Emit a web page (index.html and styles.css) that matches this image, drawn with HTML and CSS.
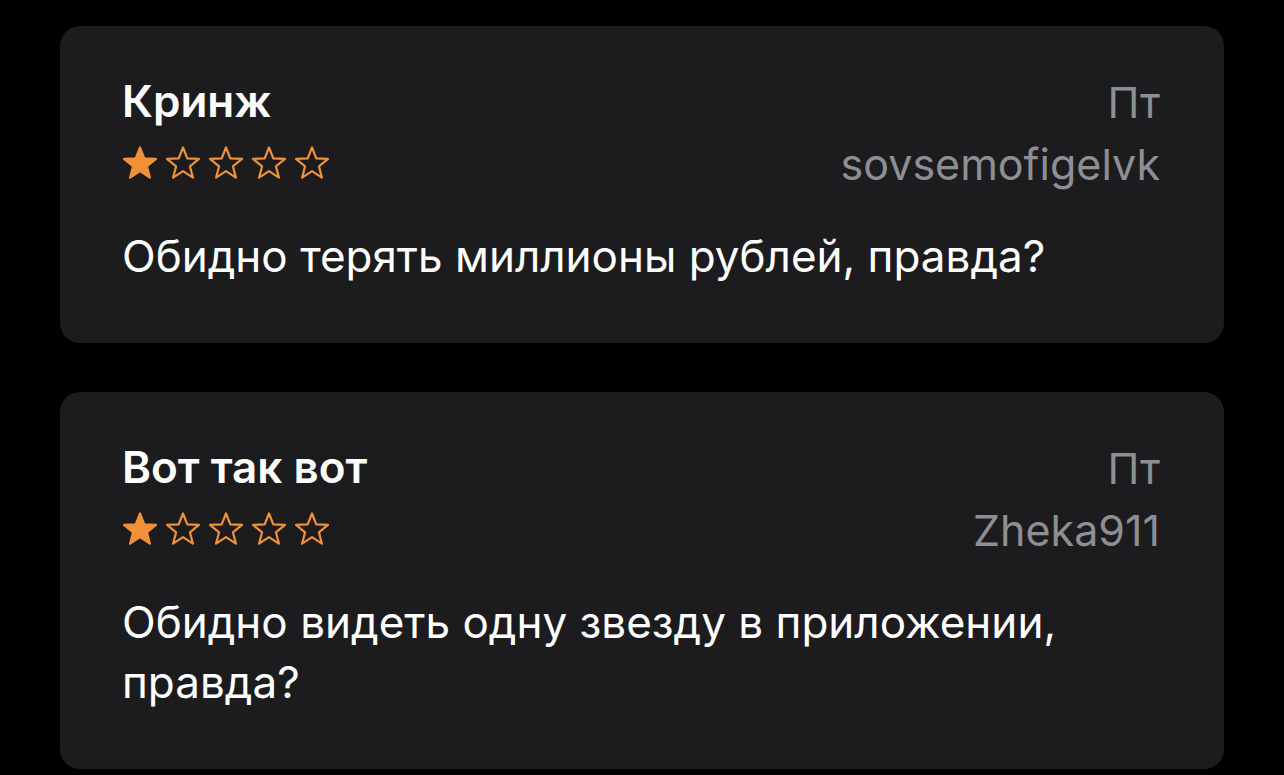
FILE: index.html
```html
<!DOCTYPE html>
<html lang="ru">
<head>
  <meta charset="UTF-8">
  <title>Отзывы</title>
  <link rel="stylesheet" href="styles.css">
</head>
<body>

  <div class="reviews">

    <div class="review">
      <div class="review-head">
        <div class="review-left">
          <h2 class="review-title">Кринж</h2>
          <div class="stars">
            <svg class="star" viewBox="0 0 36 34"><polygon class="on" points="18,1.5 22.3,12.3 34,12.9 24.9,20.3 27.9,31.6 18,25.2 8.1,31.6 11.1,20.3 2,12.9 13.7,12.3"/></svg>
            <svg class="star" viewBox="0 0 36 34"><polygon points="18,1.5 22.3,12.3 34,12.9 24.9,20.3 27.9,31.6 18,25.2 8.1,31.6 11.1,20.3 2,12.9 13.7,12.3"/></svg>
            <svg class="star" viewBox="0 0 36 34"><polygon points="18,1.5 22.3,12.3 34,12.9 24.9,20.3 27.9,31.6 18,25.2 8.1,31.6 11.1,20.3 2,12.9 13.7,12.3"/></svg>
            <svg class="star" viewBox="0 0 36 34"><polygon points="18,1.5 22.3,12.3 34,12.9 24.9,20.3 27.9,31.6 18,25.2 8.1,31.6 11.1,20.3 2,12.9 13.7,12.3"/></svg>
            <svg class="star" viewBox="0 0 36 34"><polygon points="18,1.5 22.3,12.3 34,12.9 24.9,20.3 27.9,31.6 18,25.2 8.1,31.6 11.1,20.3 2,12.9 13.7,12.3"/></svg>
          </div>
        </div>
        <div class="review-meta">
          <span class="review-date">Пт</span>
          <span class="review-author">sovsemofigelvk</span>
        </div>
      </div>
      <p class="review-text">Обидно терять миллионы рублей, правда?</p>
    </div>

    <div class="review">
      <div class="review-head">
        <div class="review-left">
          <h2 class="review-title">Вот так вот</h2>
          <div class="stars">
            <svg class="star" viewBox="0 0 36 34"><polygon class="on" points="18,1.5 22.3,12.3 34,12.9 24.9,20.3 27.9,31.6 18,25.2 8.1,31.6 11.1,20.3 2,12.9 13.7,12.3"/></svg>
            <svg class="star" viewBox="0 0 36 34"><polygon points="18,1.5 22.3,12.3 34,12.9 24.9,20.3 27.9,31.6 18,25.2 8.1,31.6 11.1,20.3 2,12.9 13.7,12.3"/></svg>
            <svg class="star" viewBox="0 0 36 34"><polygon points="18,1.5 22.3,12.3 34,12.9 24.9,20.3 27.9,31.6 18,25.2 8.1,31.6 11.1,20.3 2,12.9 13.7,12.3"/></svg>
            <svg class="star" viewBox="0 0 36 34"><polygon points="18,1.5 22.3,12.3 34,12.9 24.9,20.3 27.9,31.6 18,25.2 8.1,31.6 11.1,20.3 2,12.9 13.7,12.3"/></svg>
            <svg class="star" viewBox="0 0 36 34"><polygon points="18,1.5 22.3,12.3 34,12.9 24.9,20.3 27.9,31.6 18,25.2 8.1,31.6 11.1,20.3 2,12.9 13.7,12.3"/></svg>
          </div>
        </div>
        <div class="review-meta">
          <span class="review-date">Пт</span>
          <span class="review-author">Zheka911</span>
        </div>
      </div>
      <p class="review-text">Обидно видеть одну звезду в приложении,<br>правда?</p>
    </div>

  </div>

</body>
</html>
```

FILE: styles.css
```css
body {
  margin: 0;
  padding: 0;
  background-color: #000;
  font-family: Inter, "Noto Sans", sans-serif;
  color: #fff;
  overflow: hidden;
}

.reviews {
  display: flex;
  flex-direction: column;
  gap: 49px;
  padding: 26px 60px 0;
}

.review {
  background-color: #1c1c1e;
  border-radius: 20px;
  padding: 45px 64px 57px 62px;
}

.review-head {
  display: flex;
  justify-content: space-between;
}

.review-title {
  margin: 0;
  font-size: 44px;
  font-weight: 600;
  line-height: 60px;
}

.stars {
  display: flex;
  gap: 7px;
  margin-top: 15px;
}

.star {
  width: 36px;
  height: 34px;
  display: block;
}

.star polygon {
  fill: none;
  stroke: #f0913a;
  stroke-width: 2.2;
  stroke-linejoin: round;
}

.star polygon.on {
  fill: #f0913a;
}

.review-meta {
  display: flex;
  flex-direction: column;
  align-items: flex-end;
  color: #8e8e93;
  font-size: 43px;
  line-height: 62px;
}

.review-text {
  margin: 31px 0 0;
  font-size: 44px;
  line-height: 60px;
}
```
